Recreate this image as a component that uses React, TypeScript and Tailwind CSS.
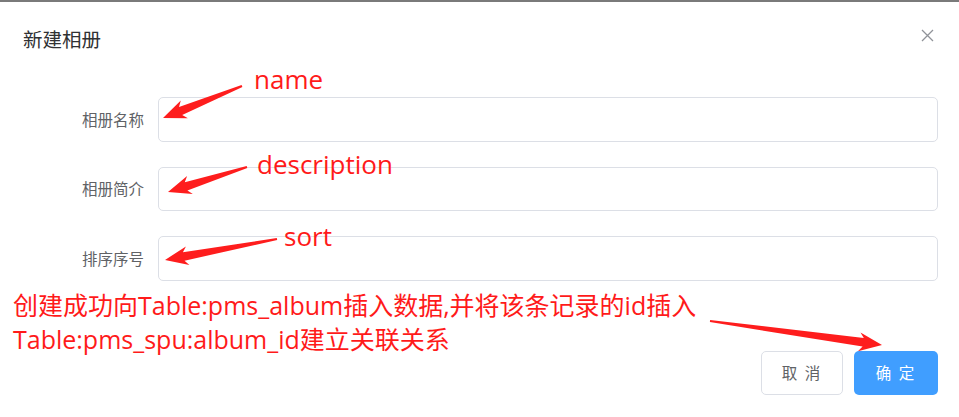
import React from 'react';

const cjk = "font-['Noto_Sans_CJK_SC',sans-serif]";
const note = "font-['Open_Sans','Noto_Sans_CJK_SC',sans-serif]";

// Стрелки-пометки: [x хвоста, y хвоста, x острия, y острия]
const arrows: [number, number, number, number][] = [
  [242, 86, 163, 118],
  [247, 167, 168, 192],
  [277, 239, 165, 260],
  [710, 321, 882, 345],
];

function arrowPoints(x1: number, y1: number, x2: number, y2: number) {
  const dx = x2 - x1;
  const dy = y2 - y1;
  const len = Math.hypot(dx, dy);
  const ux = dx / len;
  const uy = dy / len;
  const nx = -uy;
  const ny = ux;
  const local: [number, number][] = [
    [0, 1],
    [len - 19, 4.3],
    [len - 23, 9.5],
    [len, 0],
    [len - 23, -9.5],
    [len - 19, -4.3],
    [0, -1],
  ];
  return local.map(([a, b]) => `${(x1 + ux * a + nx * b).toFixed(1)},${(y1 + uy * a + ny * b).toFixed(1)}`).join(' ');
}

const fields = ['相册名称', '相册简介', '排序序号'];

const App: React.FC = () => {
  return (
    <div className="relative w-[959px] h-[417px] overflow-hidden bg-white">
      {/* Верхняя серая полоса */}
      <div className="h-[2px] bg-[#7a7a7a]" />

      {/* Заголовок диалога */}
      <div className="flex items-start justify-between pl-[23px] pr-[25px] pt-[23px]">
        <div className={`${cjk} text-[19.5px] leading-[27px] text-[#303133]`}>新建相册</div>
        <svg width="13" height="13" viewBox="0 0 13 13" className="mt-[4px]">
          <path d="M1 1L12 12M12 1L1 12" stroke="#909399" strokeWidth="1.3" fill="none" />
        </svg>
      </div>

      {/* Форма */}
      <div className="mt-[45px] flex flex-col gap-[25px] pl-[23px] pr-[21px]">
        {fields.map((label) => (
          <div key={label} className="flex items-center">
            <div className={`${cjk} w-[135px] pr-[14px] text-right text-[15.5px] text-[#606266]`}>{label}</div>
            <div className="h-[44.5px] flex-1 rounded-[5px] border border-[#dcdfe6] bg-white" />
          </div>
        ))}
      </div>

      {/* Кнопки */}
      <div className="mt-[70px] flex justify-end gap-[11px] pr-[21px]">
        <button className={`${cjk} h-[44px] w-[82px] rounded-[5px] border border-[#dcdfe6] bg-white text-[15.5px] tracking-[2px] text-[#606266]`}>取 消</button>
        <button className={`${cjk} h-[44px] w-[84px] rounded-[5px] bg-[#409eff] text-[15.5px] tracking-[2px] text-white`}>确 定</button>
      </div>

      {/* Пометки красным */}
      <div className={`${note} absolute left-[254px] top-[62px] text-[26px] leading-[34px] text-[#ff1a1a]`}>name</div>
      <div className={`${note} absolute left-[257px] top-[147px] text-[26px] leading-[34px] text-[#ff1a1a]`}>description</div>
      <div className={`${note} absolute left-[284px] top-[219px] text-[26px] leading-[34px] text-[#ff1a1a]`}>sort</div>
      <div className={`${note} absolute left-[13px] top-[288px] text-[25px] leading-[34px] text-[#ff1a1a]`}>
        <div>创建成功向Table:pms_album插入数据,并将该条记录的id插入</div>
        <div>Table:pms_spu:album_id建立关联关系</div>
      </div>

      <svg className="pointer-events-none absolute left-0 top-0" width="959" height="417">
        {arrows.map((a, i) => (
          <polygon key={i} points={arrowPoints(a[0], a[1], a[2], a[3])} fill="#fe1d1d" />
        ))}
      </svg>
    </div>
  );
};

export default App;
